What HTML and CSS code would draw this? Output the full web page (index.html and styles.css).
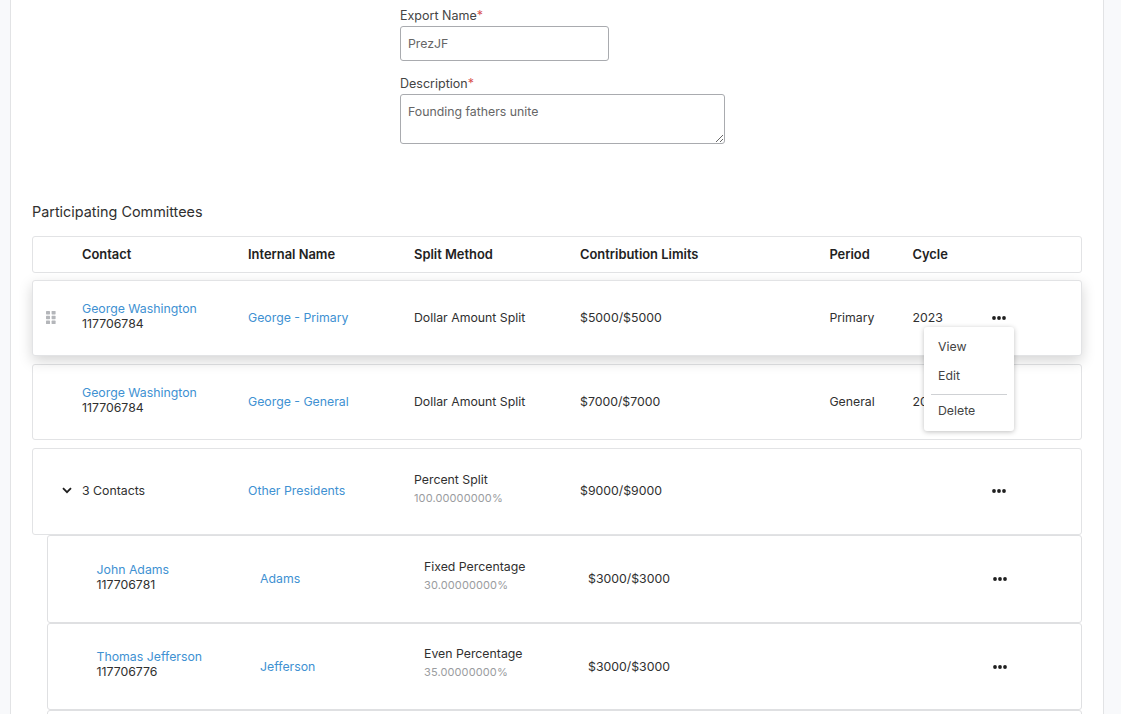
FILE: index.html
```html
<!DOCTYPE html>
<html lang="en">
<head>
<meta charset="utf-8">
<title>Export</title>
<link rel="stylesheet" href="styles.css">
</head>
<body>
<main class="panel">
  <form class="form">
    <div class="field">
      <label class="label">Export Name<span class="req">*</span></label>
      <input class="input" type="text" value="PrezJF">
    </div>
    <div class="field">
      <label class="label">Description<span class="req">*</span></label>
      <textarea class="textarea">Founding fathers unite</textarea>
    </div>
  </form>
  <h2 class="title">Participating Committees</h2>
  <div class="row head">
    <div></div><div>Contact</div><div>Internal Name</div><div>Split Method</div><div>Contribution Limits</div><div>Period</div><div>Cycle</div><div></div>
  </div>
  <div class="row item lifted">
    <div class="grip"><svg width="10" height="13" viewBox="0 0 10 13"><g fill="#b4b6ba"><rect x="0" y="0" width="4" height="3.4" rx=".6"/><rect x="5.6" y="0" width="4" height="3.4" rx=".6"/><rect x="0" y="4.8" width="4" height="3.4" rx=".6"/><rect x="5.6" y="4.8" width="4" height="3.4" rx=".6"/><rect x="0" y="9.6" width="4" height="3.4" rx=".6"/><rect x="5.6" y="9.6" width="4" height="3.4" rx=".6"/></g></svg></div>
    <div class="who"><a class="link">George Washington</a><div>117706784</div></div>
    <div><a class="link">George - Primary</a></div>
    <div>Dollar Amount Split</div>
    <div>$5000/$5000</div>
    <div>Primary</div>
    <div>2023</div>
    <div class="dots"><svg width="14" height="4" viewBox="0 0 14 4"><circle cx="2" cy="2" r="1.9"/><circle cx="7" cy="2" r="1.9"/><circle cx="12" cy="2" r="1.9"/></svg></div>
    <div class="menu">
      <div class="menu-item">View</div>
      <div class="menu-item">Edit</div>
      <div class="menu-sep"></div>
      <div class="menu-item">Delete</div>
    </div>
  </div>
  <div class="row item">
    <div></div>
    <div class="who"><a class="link">George Washington</a><div>117706784</div></div>
    <div><a class="link">George - General</a></div>
    <div>Dollar Amount Split</div>
    <div>$7000/$7000</div>
    <div>General</div>
    <div>2023</div>
    <div></div>
  </div>
  <div class="row item group">
    <div class="chev"><svg width="10" height="7" viewBox="0 0 10 7"><path d="M1 1.2 5 5.2 9 1.2" fill="none" stroke="#1f1f1f" stroke-width="1.8"/></svg></div>
    <div>3 Contacts</div>
    <div><a class="link">Other Presidents</a></div>
    <div class="split">Percent Split<div class="pct">100.00000000%</div></div>
    <div>$9000/$9000</div>
    <div></div>
    <div></div>
    <div class="dots"><svg width="14" height="4" viewBox="0 0 14 4"><circle cx="2" cy="2" r="1.9"/><circle cx="7" cy="2" r="1.9"/><circle cx="12" cy="2" r="1.9"/></svg></div>
  </div>
  <div class="child">
    <div class="who"><a class="link">John Adams</a><div>117706781</div></div>
    <div><a class="link">Adams</a></div>
    <div class="split">Fixed Percentage<div class="pct">30.00000000%</div></div>
    <div>$3000/$3000</div>
    <div class="dots"><svg width="14" height="4" viewBox="0 0 14 4"><circle cx="2" cy="2" r="1.9"/><circle cx="7" cy="2" r="1.9"/><circle cx="12" cy="2" r="1.9"/></svg></div>
  </div>
  <div class="child">
    <div class="who"><a class="link">Thomas Jefferson</a><div>117706776</div></div>
    <div><a class="link">Jefferson</a></div>
    <div class="split">Even Percentage<div class="pct">35.00000000%</div></div>
    <div>$3000/$3000</div>
    <div class="dots"><svg width="14" height="4" viewBox="0 0 14 4"><circle cx="2" cy="2" r="1.9"/><circle cx="7" cy="2" r="1.9"/><circle cx="12" cy="2" r="1.9"/></svg></div>
  </div>
  <div class="child"></div>
</main>
</body>
</html>
```
FILE: styles.css
```css
html, body { margin: 0; height: 714px; overflow: hidden; background: #f8f9fb; }
body { font-family: Inter, "Liberation Sans", sans-serif; font-size: 12.3px; line-height: 15px; color: #303030; }
.panel { box-sizing: border-box; width: 1094px; height: 714px; margin-left: 10px; padding: 0 21px; background: #fff; border-left: 1px solid #e2e3e5; border-right: 1px solid #e2e3e5; overflow: hidden; }
.form { margin-left: 368px; padding-top: 8px; }
.field { margin-bottom: 15px; }
.label { display: block; height: 18px; font-size: 12.5px; line-height: 16px; color: #444; }
.req { color: #d9534f; }
.input, .textarea { display: block; box-sizing: border-box; border: 1px solid #a9abaf; border-radius: 3px; padding: 0 7px; font: inherit; color: #666; background: #fff; outline: none; margin: 0; }
.input { width: 209px; height: 35px; }
.textarea { width: 325px; height: 50px; padding-top: 9px; resize: vertical; line-height: 16px; }
.title { margin: 59px 0 15px; height: 18px; font-size: 14.4px; font-weight: 400; line-height: 18px; color: #303030; }
.row { box-sizing: border-box; display: grid; grid-template-columns: 49px 166px 166px 166px 249.4px 83px 80px 1fr; align-items: center; border: 1px solid #e2e3e5; border-radius: 3px; background: #fff; position: relative; margin-bottom: 8px; padding-bottom: 2px; }
.head { height: 37px; margin-bottom: 7px; padding-bottom: 0; font-size: 12.9px; font-weight: 600; color: #222; }
.item { height: 76px; }
.lifted { box-shadow: 0 5px 14px rgba(0, 0, 0, .17); z-index: 1; }
.group { height: 87px; margin-bottom: 0; }
.grip { padding-left: 13px; line-height: 0; }
.chev { padding-left: 29px; line-height: 0; }
.link { color: #4091d2; }
.who { margin-bottom: 2px; }
.split { margin-bottom: 4px; }
.pct { margin-top: 4px; font-size: 11px; letter-spacing: .12px; color: #9a9ca0; }
.dots { line-height: 0; padding-top: 1px; }
.dots circle { fill: #1f1f1f; }
.child { box-sizing: border-box; display: grid; grid-template-columns: 163.5px 164px 164px 404.5px 1fr; padding-left: 48.5px; align-items: center; height: 87.5px; margin-left: 15px; border: 1px solid #dfe0e2; border-radius: 3px; background: #fff; }
.child .who { margin-bottom: 4px; }
.child .split { margin-bottom: 6px; }
.menu { position: absolute; left: 891px; top: 46px; box-sizing: border-box; width: 90px; height: 104px; padding: 5px 7px; background: #fff; border-radius: 3px; box-shadow: 0 1px 5px rgba(0, 0, 0, .25); z-index: 2; }
.menu-item { height: 29px; line-height: 29px; padding-left: 7px; color: #444; }
.menu-sep { height: 1px; margin: 4px 0 1px; background: #cfd1d4; }
```
